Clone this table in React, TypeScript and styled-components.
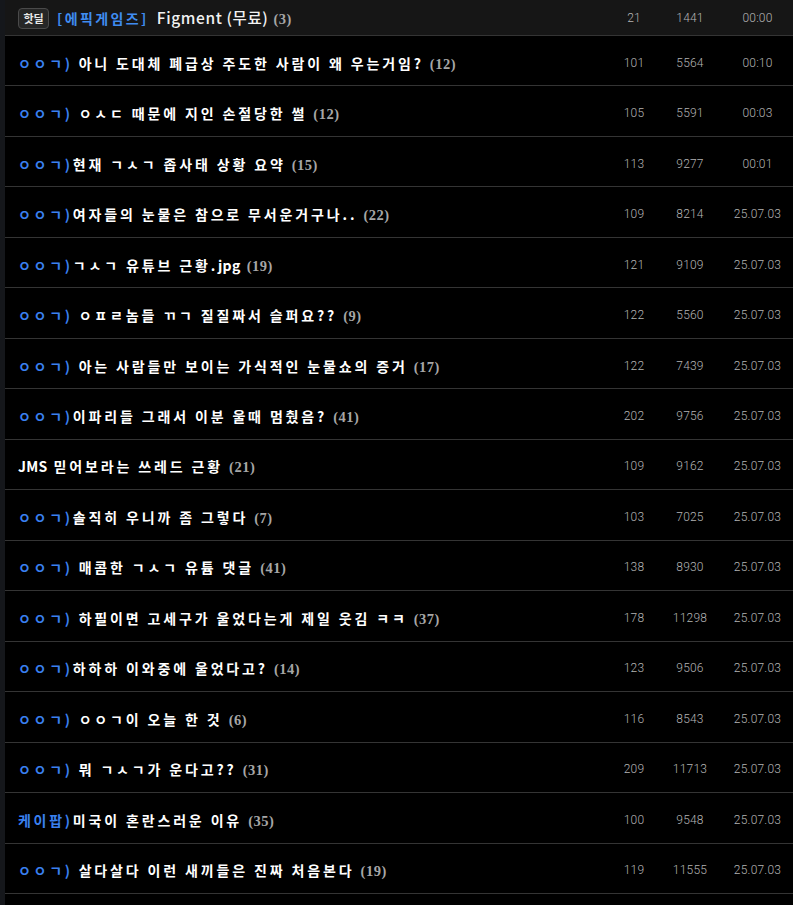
import React from "react";
import styled, { createGlobalStyle } from "styled-components";

const Global = createGlobalStyle`
  html, body { margin: 0; padding: 0; background: #000; }
  body { font-family: "Noto Sans CJK KR", "Noto Sans", sans-serif; }
`;

const Page = styled.div`
  display: flex;
  min-height: 905px;
  background: #000;
`;

const Strip = styled.div`
  width: 5px;
  flex: 0 0 5px;
  background: #15171b;
`;

const List = styled.div`
  flex: 1;
  display: flex;
  flex-direction: column;
`;

const Row = styled.div<{ $notice?: boolean }>`
  box-sizing: border-box;
  height: ${(p) => (p.$notice ? "36px" : "50.47px")};
  padding-top: ${(p) => (p.$notice ? "1px" : "4px")};
  display: grid;
  grid-template-columns: 1fr 48px 64px 71px;
  align-items: center;
  border-bottom: 1px solid #343434;
  background: ${(p) => (p.$notice ? "#161616" : "#000")};
`;

const TitleCell = styled.div`
  padding-left: 13px;
  white-space: pre;
  overflow: hidden;
  line-height: 20px;
`;

const Badge = styled.span`
  box-sizing: border-box;
  display: inline-flex;
  vertical-align: middle;
  align-items: center;
  justify-content: center;
  width: 31px;
  height: 21px;
  margin-right: 8px;
  margin-top: -3px;
  border: 1px solid #4a4a4a;
  border-radius: 4px;
  background: #262626;
  color: #e8e8e8;
  font-size: 11px;
  font-weight: 700;
  line-height: 1;
`;

const Category = styled.span`
  color: #3f8cf0;
  font-size: 14px;
  font-weight: 700;
  letter-spacing: 2.4px;
  margin-right: 8px;
`;

const NoticeTitle = styled.span`
  color: #f2f2f2;
  font-size: 15.5px;
  font-weight: 500;
  letter-spacing: 0.6px;
`;

const Prefix = styled.span`
  color: #3a80f0;
  font-size: 14px;
  font-weight: 700;
  letter-spacing: 2.7px;
`;

const Title = styled.span`
  color: #fff;
  font-size: 14px;
  font-weight: 700;
  letter-spacing: 2.85px;
`;

const Latin = styled.span`
  letter-spacing: 0.3px;
`;

const Count = styled.span<{ $gap?: number }>`
  color: #a6a6a6;
  font-family: "Liberation Serif", "DejaVu Serif", serif;
  font-size: 14.5px;
  font-weight: 700;
  margin-left: ${(p) => p.$gap ?? 2}px;
  letter-spacing: 0.5px;
`;

const Num = styled.div`
  text-align: center;
  color: #b4b4b4;
  font-family: Roboto, "Liberation Sans", sans-serif;
  font-size: 12px;
  font-weight: 300;
  letter-spacing: 0.2px;
`;

type Post = {
  prefix?: string;
  title: string;
  count: number;
  rec: number;
  views: number;
  date: string;
};

const posts: Post[] = [
  { prefix: "ㅇㅇㄱ) ", title: "아니 도대체 폐급상 주도한 사람이 왜 우는거임?", count: 12, rec: 101, views: 5564, date: "00:10" },
  { prefix: "ㅇㅇㄱ) ", title: "ㅇㅅㄷ 때문에 지인 손절당한 썰", count: 12, rec: 105, views: 5591, date: "00:03" },
  { prefix: "ㅇㅇㄱ)", title: "현재 ㄱㅅㄱ 좁사태 상황 요약", count: 15, rec: 113, views: 9277, date: "00:01" },
  { prefix: "ㅇㅇㄱ)", title: "여자들의 눈물은 참으로 무서운거구나..", count: 22, rec: 109, views: 8214, date: "25.07.03" },
  { prefix: "ㅇㅇㄱ)", title: "ㄱㅅㄱ 유튜브 근황.jpg", count: 19, rec: 121, views: 9109, date: "25.07.03" },
  { prefix: "ㅇㅇㄱ) ", title: "ㅇㅍㄹ놈들 ㄲㄱ 질질짜서 슬퍼요??", count: 9, rec: 122, views: 5560, date: "25.07.03" },
  { prefix: "ㅇㅇㄱ) ", title: "아는 사람들만 보이는 가식적인 눈물쇼의 증거", count: 17, rec: 122, views: 7439, date: "25.07.03" },
  { prefix: "ㅇㅇㄱ)", title: "이파리들 그래서 이분 울때 멈췄음?", count: 41, rec: 202, views: 9756, date: "25.07.03" },
  { title: "JMS 믿어보라는 쓰레드 근황", count: 21, rec: 109, views: 9162, date: "25.07.03" },
  { prefix: "ㅇㅇㄱ)", title: "솔직히 우니까 좀 그렇다", count: 7, rec: 103, views: 7025, date: "25.07.03" },
  { prefix: "ㅇㅇㄱ) ", title: "매콤한 ㄱㅅㄱ 유튬 댓글", count: 41, rec: 138, views: 8930, date: "25.07.03" },
  { prefix: "ㅇㅇㄱ) ", title: "하필이면 고세구가 울었다는게 제일 웃김 ㅋㅋ", count: 37, rec: 178, views: 11298, date: "25.07.03" },
  { prefix: "ㅇㅇㄱ)", title: "하하하 이와중에 울었다고?", count: 14, rec: 123, views: 9506, date: "25.07.03" },
  { prefix: "ㅇㅇㄱ) ", title: "ㅇㅇㄱ이 오늘 한 것", count: 6, rec: 116, views: 8543, date: "25.07.03" },
  { prefix: "ㅇㅇㄱ) ", title: "뭐 ㄱㅅㄱ가 운다고??", count: 31, rec: 209, views: 11713, date: "25.07.03" },
  { prefix: "케이팝)", title: "미국이 혼란스러운 이유", count: 35, rec: 100, views: 9548, date: "25.07.03" },
  { prefix: "ㅇㅇㄱ) ", title: "살다살다 이런 새끼들은 진짜 처음본다", count: 19, rec: 119, views: 11555, date: "25.07.03" },
];

function renderTitle(text: string) {
  return text.split(/([A-Za-z]+)/).map((part, i) =>
    /^[A-Za-z]+$/.test(part) ? <Latin key={i}>{part}</Latin> : part
  );
}

export default function App() {
  return (
    <>
      <Global />
      <Page>
        <Strip />
        <List>
          <Row $notice>
            <TitleCell>
              <Badge>핫딜</Badge>
              <Category>[에픽게임즈]</Category>
              <NoticeTitle>Figment (무료)</NoticeTitle>
              <Count $gap={5}>(3)</Count>
            </TitleCell>
            <Num>21</Num>
            <Num>1441</Num>
            <Num>00:00</Num>
          </Row>
          {posts.map((p, i) => (
            <Row key={i}>
              <TitleCell>
                {p.prefix && <Prefix>{p.prefix}</Prefix>}
                <Title>{renderTitle(p.title)}</Title>
                <Count> ({p.count})</Count>
              </TitleCell>
              <Num>{p.rec}</Num>
              <Num>{p.views}</Num>
              <Num>{p.date}</Num>
            </Row>
          ))}
        </List>
      </Page>
    </>
  );
}
